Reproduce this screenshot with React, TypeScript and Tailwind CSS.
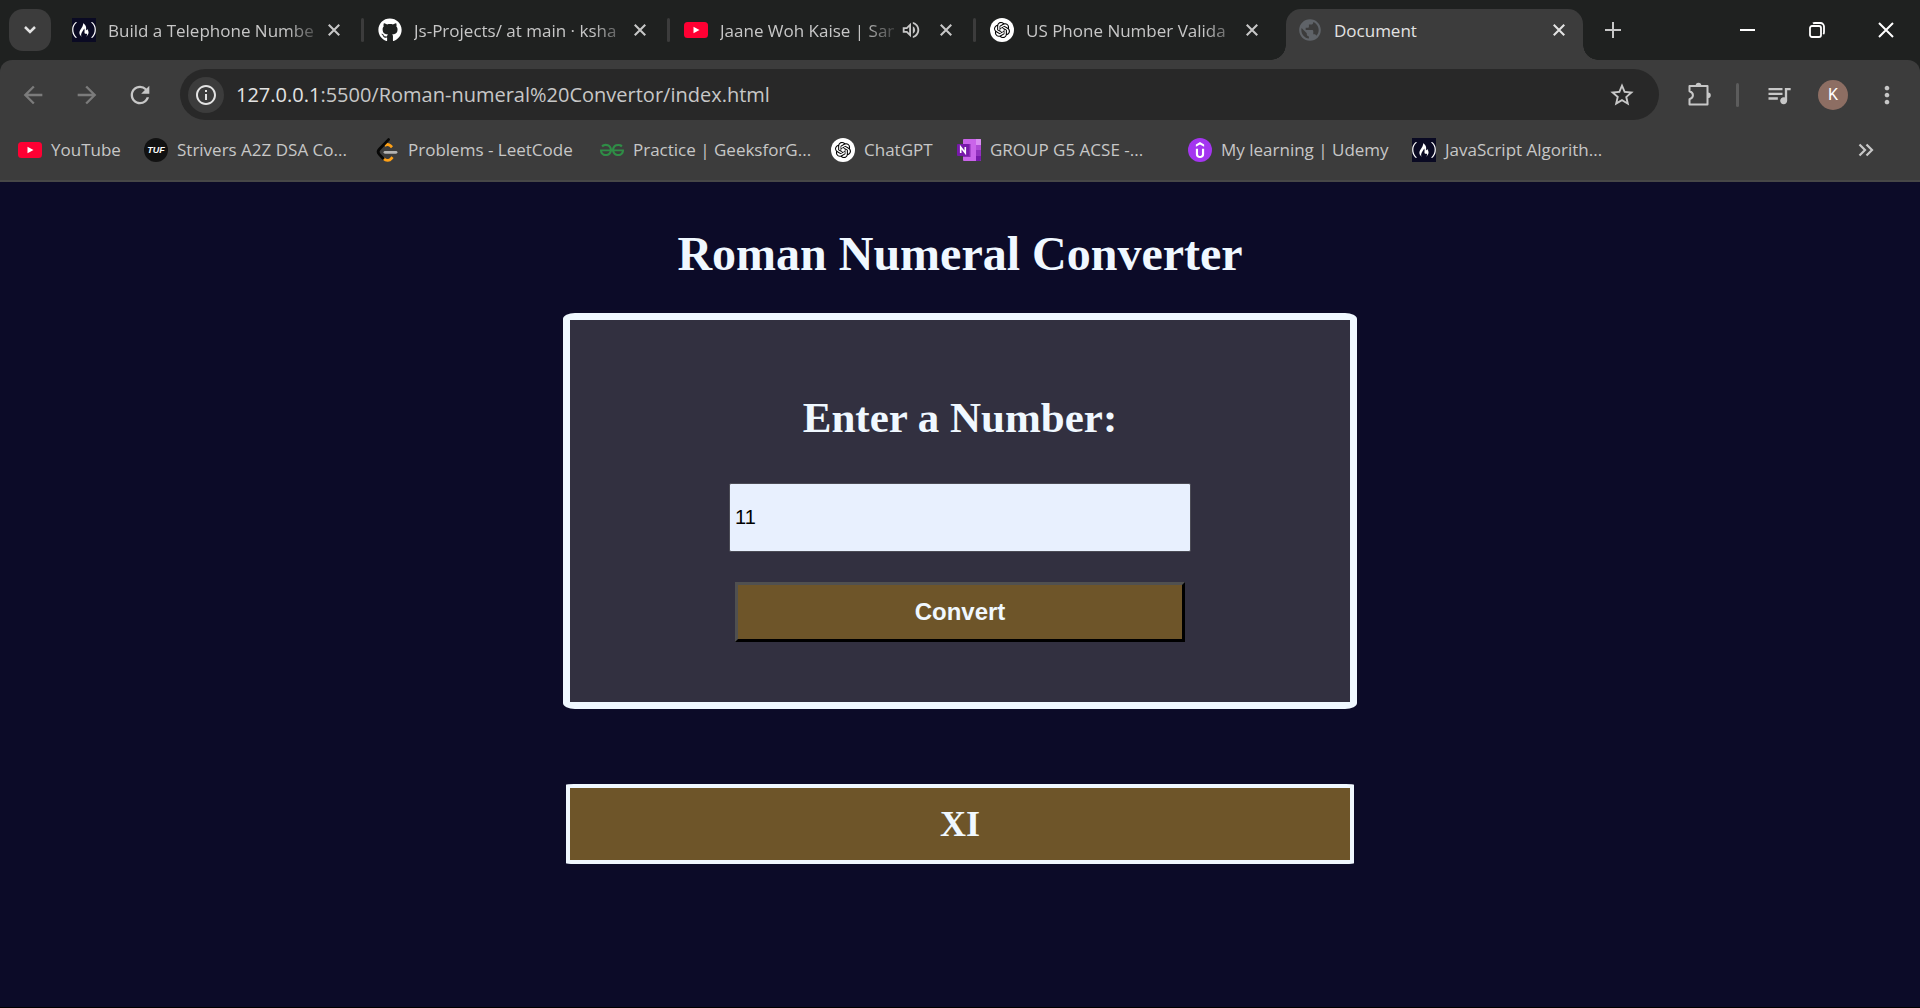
import React, { useState } from "react";
import { FaFreeCodeCamp, FaGithub } from "react-icons/fa";
import { SiOpenai, SiUdemy, SiGeeksforgeeks } from "react-icons/si";
import {
  MdArrowBack,
  MdArrowForward,
  MdMoreVert,
  MdOutlineInfo,
  MdOutlineVolumeUp,
  MdPublic,
  MdQueueMusic,
  MdRefresh,
  MdStarBorder,
} from "react-icons/md";

function CrossIcon({ className, width }: { className: string; width: number }) {
  return (
    <svg viewBox="0 0 16 16" className={className} fill="none" stroke="currentColor" strokeWidth={width}>
      <path d="M1 1L15 15M15 1L1 15" />
    </svg>
  );
}

function CodeCampIcon() {
  return (
    <span className="flex size-6 shrink-0 items-center justify-center bg-[#0a0a23] text-white">
      <FaFreeCodeCamp className="size-6" />
    </span>
  );
}

function YouTubeIcon() {
  return (
    <svg viewBox="0 0 24 24" className="size-6 shrink-0">
      <rect y="4" width="24" height="16" rx="3.5" fill="#ff0033" />
      <path d="M9.5 8.8v6.4l6-3.2z" fill="#fff" />
    </svg>
  );
}

function GptIcon() {
  return (
    <span className="flex size-6 shrink-0 items-center justify-center rounded-full bg-white text-black">
      <SiOpenai className="size-4" />
    </span>
  );
}

function TufIcon() {
  return (
    <span className="flex size-6 shrink-0 items-center justify-center rounded-full bg-[#121212] font-['Liberation_Sans'] text-[9px] leading-none font-bold text-white italic">
      TUF
    </span>
  );
}

function LeetCodeIcon() {
  return (
    <svg viewBox="0 0 24 24" className="size-6 shrink-0" fill="none" strokeLinecap="round" strokeWidth="2.8">
      <path d="M9.5 7.6c2.2-1.6 4.4-1.3 6 .2l1.500 1.500" stroke="#ffa116" strokeLinecap="butt" />
      <path d="M8.500 20.500c2.700 2.700 5.900 2.500 8-.2l1-1.200" stroke="#ffa116" strokeLinecap="butt" />
      <path d="M13.500 1.600L4.300 11.200c-1.500 1.700-1.500 3.600 0 5.200L8 20.200" stroke="#070706" />
      <path d="M10 14.300h11" stroke="#b3b3b3" />
    </svg>
  );
}

function OneNoteIcon() {
  return (
    <svg viewBox="0 0 24 24" className="size-6 shrink-0">
      <rect x="6" y="1" width="18" height="22" rx="1" fill="#ca64ea" />
      <path d="M19 1h4a1 1 0 0 1 1 1v5h-5z" fill="#d98cf2" />
      <path d="M19 7h5v5h-5z" fill="#ae4bd5" />
      <path d="M19 12h5v6h-5z" fill="#9332bf" />
      <path d="M19 18h5v4a1 1 0 0 1-1 1h-4z" fill="#7719aa" />
      <path d="M6 6h7.500v13H6z" fill="#8a2cb4" />
      <rect y="6" width="12" height="12" rx="1" fill="#7719aa" />
      <path d="M3.700 15V9l4.600 6V9" fill="none" stroke="#fff" strokeWidth="1.600" />
    </svg>
  );
}

function UdemyIcon() {
  return (
    <span className="flex size-6 shrink-0 items-center justify-center rounded-full bg-[#a435f0] text-white">
      <SiUdemy className="size-4" />
    </span>
  );
}

function PuzzleIcon() {
  return (
    <svg viewBox="0 0 28 28" className="size-7" fill="none" stroke="currentColor" strokeWidth="2" strokeLinejoin="round">
      <path d="M4.500 5h18v18.500h-18v-5.300c4.600-1.600 4.600-6.300 0-7.900z" />
      <path d="M10.700 4.500a2.800 2.800 0 0 1 5.600 0zM23 11.500a2.800 2.800 0 0 1 0 5.600z" fill="currentColor" stroke="none" />
    </svg>
  );
}

type TabData = { title: string; icon: React.ReactNode; audio?: boolean; divider: boolean };

const tabs: TabData[] = [
  { title: "Build a Telephone Numbe", icon: <CodeCampIcon />, divider: true },
  { title: "Js-Projects/ at main · ksha", icon: <FaGithub className="size-6 shrink-0 text-white" />, divider: true },
  { title: "Jaane Woh Kaise | San", icon: <YouTubeIcon />, audio: true, divider: true },
  { title: "US Phone Number Valida", icon: <GptIcon />, divider: false },
];

const bookmarks = [
  { label: "YouTube", icon: <YouTubeIcon />, width: "w-[126px]" },
  { label: "Strivers A2Z DSA Co...", icon: <TufIcon />, width: "w-[231px]" },
  { label: "Problems - LeetCode", icon: <LeetCodeIcon />, width: "w-[225px]" },
  { label: "Practice | GeeksforG...", icon: <SiGeeksforgeeks className="size-6 shrink-0 text-[#2f8d46]" />, width: "w-[231px]" },
  { label: "ChatGPT", icon: <GptIcon />, width: "w-[126px]" },
  { label: "GROUP G5 ACSE -...", icon: <OneNoteIcon />, width: "w-[231px]" },
  { label: "My learning | Udemy", icon: <UdemyIcon />, width: "w-[224px]" },
  { label: "JavaScript Algorith...", icon: <CodeCampIcon />, width: "w-[231px]" },
];

function Tab({ tab }: { tab: TabData }) {
  return (
    <div className="relative flex w-[306px] items-center pr-[17px] pl-[15px]">
      {tab.icon}
      <span
        className={`ml-3 flex-1 overflow-hidden pt-0.5 text-[17px] leading-6 whitespace-nowrap [mask-image:linear-gradient(to_right,#000_calc(100%-32px),#0003)] ${
          tab.audio ? "mr-1.5" : "mr-1"
        }`}
      >
        {tab.title}
      </span>
      {tab.audio && (
        <button aria-label="Mute tab" className="mr-3">
          <MdOutlineVolumeUp className="size-[22px]" />
        </button>
      )}
      <button aria-label={`Close ${tab.title}`} className="flex size-6 items-center justify-center">
        <CrossIcon className="size-3" width={2.8} />
      </button>
      {tab.divider && <span className="absolute top-[18px] -right-px h-6 w-[3px] rounded bg-[#3c3c3c]" />}
    </div>
  );
}

function TabStrip() {
  return (
    <div className="flex h-[60px] items-stretch text-[#c7c7c7]">
      <button
        aria-label="Search tabs"
        className="mt-[9px] mr-1.5 ml-[9px] flex size-[42px] shrink-0 items-center justify-center rounded-[14px] bg-[#3c3c3c] text-[#e3e3e3]"
      >
        <svg viewBox="0 0 12 8" className="h-2 w-3" fill="none" stroke="currentColor" strokeWidth="2.500">
          <path d="M1 1l5 5 5-5" />
        </svg>
      </button>
      {tabs.map((tab) => (
        <Tab key={tab.title} tab={tab} />
      ))}
      <div className="relative mt-[9px] ml-[5px] flex w-[297px] items-center rounded-t-[15px] bg-[#3c3c3c] pr-3 pb-[9px] pl-[11px] text-[#e3e3e3]">
        <span className="absolute bottom-0 -left-[15px] size-[15px] bg-[radial-gradient(circle_at_0_0,transparent_14.5px,#3c3c3c_15px)]" />
        <span className="absolute -right-[15px] bottom-0 size-[15px] bg-[radial-gradient(circle_at_100%_0,transparent_14.5px,#3c3c3c_15px)]" />
        <MdPublic className="size-[26px] text-[#5f6368]" />
        <span className="ml-[11px] flex-1 pt-0.5 text-[17px] leading-6">Document</span>
        <button aria-label="Close Document" className="flex size-6 items-center justify-center">
          <CrossIcon className="size-3" width={2.8} />
        </button>
      </div>
      <button aria-label="New tab" className="mt-[9px] ml-[9px] flex size-[42px] items-center justify-center">
        <svg viewBox="0 0 16 16" className="size-4" stroke="currentColor" strokeWidth="2">
          <path d="M8 0v16M0 8h16" />
        </svg>
      </button>
      <div className="ml-auto flex text-white">
        <button aria-label="Minimize" className="flex w-[69px] items-center justify-center">
          <span className="h-0.5 w-[15px] bg-white" />
        </button>
        <button aria-label="Restore" className="flex w-[69px] items-center justify-center">
          <svg viewBox="0 0 16 16" className="size-4" fill="none" stroke="currentColor" strokeWidth="1.800">
            <rect x="1" y="4" width="11" height="11" rx="2" />
            <path d="M4 1.500C4.500 1 5 1 6 1h5.500A3.500 3.500 0 0 1 15 4.500V10c0 1 0 1.500-.7 2.200" />
          </svg>
        </button>
        <button aria-label="Close window" className="flex w-[69px] items-center justify-center">
          <CrossIcon className="size-4" width={2} />
        </button>
      </div>
    </div>
  );
}

function Toolbar() {
  return (
    <div className="flex items-center px-[19px] pt-[9px] text-[#c7c7c7]">
      <button aria-label="Back" className="text-[#7b7b7b]">
        <MdArrowBack className="size-7" />
      </button>
      <button aria-label="Forward" className="ml-[26px] text-[#7b7b7b]">
        <MdArrowForward className="size-7" />
      </button>
      <button aria-label="Reload" className="ml-[25px]">
        <MdRefresh className="size-7" />
      </button>
      <div className="ml-[26px] flex h-[51px] flex-1 items-center rounded-full bg-[#282828] pr-[23px] pl-2">
        <button aria-label="Site information" className="flex size-9 items-center justify-center rounded-full bg-[#3c3c3c] text-[#e3e3e3]">
          <MdOutlineInfo className="size-6" />
        </button>
        <div className="ml-3 flex-1 text-xl leading-7 whitespace-nowrap">
          <span className="text-[#e3e3e3]">127.0.0.1</span>:5500/Roman-numeral%20Convertor/index.html
        </div>
        <button aria-label="Bookmark this page">
          <MdStarBorder className="size-7" />
        </button>
      </div>
      <button aria-label="Extensions" className="ml-[26px]">
        <PuzzleIcon />
      </button>
      <span className="ml-[23px] h-6 w-[3px] rounded bg-[#5c5c5c]" />
      <button aria-label="Media control" className="ml-[26px]">
        <MdQueueMusic className="size-7" />
      </button>
      <button
        aria-label="Profile"
        className="ml-[25px] flex size-[30px] items-center justify-center rounded-full bg-[#8d6e63] font-[Roboto] text-base text-white"
      >
        K
      </button>
      <button aria-label="Menu" className="ml-[25px]">
        <MdMoreVert className="size-7" />
      </button>
    </div>
  );
}

function BookmarksBar() {
  return (
    <nav className="flex h-[62px] items-center border-b-2 border-[#474747] pr-[46px] pl-[18px] text-[17px] leading-6 text-[#c7c7c7]">
      {bookmarks.map((b) => (
        <a key={b.label} href="#" className={`flex items-center gap-[9px] whitespace-nowrap ${b.width}`}>
          {b.icon}
          {b.label}
        </a>
      ))}
      <button aria-label="More bookmarks" className="ml-auto">
        <svg viewBox="0 0 16 14" className="h-3.5 w-4" fill="none" stroke="currentColor" strokeWidth="2.200">
          <path d="M1.500 1.500L7 7l-5.500 5.500M8.500 1.500L14 7l-5.500 5.500" />
        </svg>
      </button>
    </nav>
  );
}

function toRoman(value: number): string {
  const table: [number, string][] = [
    [1000, "M"], [900, "CM"], [500, "D"], [400, "CD"], [100, "C"], [90, "XC"],
    [50, "L"], [40, "XL"], [10, "X"], [9, "IX"], [5, "V"], [4, "IV"], [1, "I"],
  ];
  let rest = value;
  let out = "";
  for (const [n, s] of table) {
    while (rest >= n) {
      out += s;
      rest -= n;
    }
  }
  return out;
}

export default function App() {
  const [value, setValue] = useState("11");
  const [result, setResult] = useState("XI");

  const submit = (event: React.FormEvent) => {
    event.preventDefault();
    const n = Number(value);
    setResult(n >= 1 && n <= 3999 ? toRoman(Math.floor(n)) : "Please enter a valid number");
  };

  return (
    <div className="flex min-h-screen flex-col bg-[#0c0b28] font-['Open_Sans',sans-serif]">
      <header className="bg-[#1f2120]">
        <TabStrip />
        <div className="rounded-t-xl bg-[#3c3c3c]">
          <Toolbar />
          <BookmarksBar />
        </div>
      </header>
      <main className="flex flex-1 flex-col items-center border-b border-black px-4 pt-11 font-['Liberation_Serif',serif] font-bold text-[#f0f8ff]">
        <h1 className="text-5xl leading-14">Roman Numeral Converter</h1>
        <form
          onSubmit={submit}
          className="mt-[31px] flex w-[794px] max-w-full flex-col items-center rounded-[1.5%] border-[7px] border-[#f0f8ff] bg-[#323040] pt-[72px] pb-[60px]"
        >
          <label htmlFor="number" className="text-[43px] leading-[52px]">
            Enter a Number:
          </label>
          <input
            id="number"
            value={value}
            onChange={(event) => setValue(event.target.value)}
            className="mt-[39px] h-[69px] w-[462px] max-w-full rounded-xs border border-[#4b4b55] bg-[#e8f0fe] px-[5px] font-['Liberation_Sans',sans-serif] text-xl font-normal text-black outline-none"
          />
          <button
            type="submit"
            className="mt-[30px] h-[60px] w-[450px] max-w-full border-3 border-t-[#505050] border-r-black border-b-black border-l-[#505050] bg-[#6e5529] font-['Liberation_Sans',sans-serif] text-2xl"
          >
            Convert
          </button>
        </form>
        <output
          htmlFor="number"
          className="mt-[75px] flex min-h-20 w-[788px] max-w-full items-center justify-center rounded-[1%] border-4 border-[#f0f8ff] bg-[#6e5529] text-4xl"
        >
          {result}
        </output>
      </main>
    </div>
  );
}
